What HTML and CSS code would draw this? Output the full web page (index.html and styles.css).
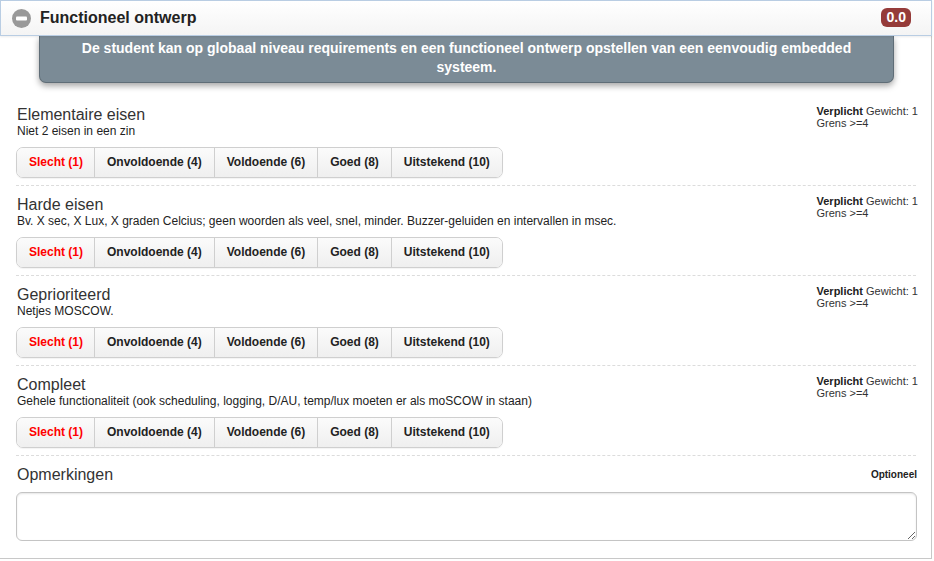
FILE: index.html
```html
<!DOCTYPE html>
<html>
<head>
<meta charset="utf-8">
<link rel="stylesheet" href="styles.css">
</head>
<body>
<div class="panel">
  <div class="panel-head">
    <svg class="toggle" width="19" height="19" viewBox="0 0 19 19"><circle cx="9.5" cy="9.5" r="9.5" fill="#999"/><rect x="4" y="7.5" width="11" height="4" rx="1" fill="#fff"/></svg>
    <span class="panel-title">Functioneel ontwerp</span>
    <span class="score">0.0</span>
  </div>
  <div class="goal">De student kan op globaal niveau requirements en een functioneel ontwerp opstellen van een eenvoudig embedded systeem.</div>
  <div class="criteria">
    <div class="criterion">
      <div class="info"><b>Verplicht</b> Gewicht: 1<br>Grens &gt;=4</div>
      <div class="crit-title">Elementaire eisen</div>
      <div class="crit-desc">Niet 2 eisen in een zin</div>
      <div class="btn-group"><span class="btn active">Slecht (1)</span><span class="btn">Onvoldoende (4)</span><span class="btn">Voldoende (6)</span><span class="btn">Goed (8)</span><span class="btn">Uitstekend (10)</span></div>
    </div>
    <div class="criterion">
      <div class="info"><b>Verplicht</b> Gewicht: 1<br>Grens &gt;=4</div>
      <div class="crit-title">Harde eisen</div>
      <div class="crit-desc">Bv. X sec, X Lux, X graden Celcius; geen woorden als veel, snel, minder. Buzzer-geluiden en intervallen in msec.</div>
      <div class="btn-group"><span class="btn active">Slecht (1)</span><span class="btn">Onvoldoende (4)</span><span class="btn">Voldoende (6)</span><span class="btn">Goed (8)</span><span class="btn">Uitstekend (10)</span></div>
    </div>
    <div class="criterion">
      <div class="info"><b>Verplicht</b> Gewicht: 1<br>Grens &gt;=4</div>
      <div class="crit-title">Geprioriteerd</div>
      <div class="crit-desc">Netjes MOSCOW.</div>
      <div class="btn-group"><span class="btn active">Slecht (1)</span><span class="btn">Onvoldoende (4)</span><span class="btn">Voldoende (6)</span><span class="btn">Goed (8)</span><span class="btn">Uitstekend (10)</span></div>
    </div>
    <div class="criterion">
      <div class="info"><b>Verplicht</b> Gewicht: 1<br>Grens &gt;=4</div>
      <div class="crit-title">Compleet</div>
      <div class="crit-desc">Gehele functionaliteit (ook scheduling, logging, D/AU, temp/lux moeten er als moSCOW in staan)</div>
      <div class="btn-group"><span class="btn active">Slecht (1)</span><span class="btn">Onvoldoende (4)</span><span class="btn">Voldoende (6)</span><span class="btn">Goed (8)</span><span class="btn">Uitstekend (10)</span></div>
    </div>
    <div class="remarks">
      <div class="opt">Optioneel</div>
      <div class="crit-title">Opmerkingen</div>
      <textarea class="remark-box"></textarea>
    </div>
  </div>
</div>
</body>
</html>
```
FILE: styles.css
```css
html, body { margin: 0; padding: 0; background: #fff; }
body { font-family: "Liberation Sans", Arial, Helvetica, sans-serif; color: #333; }
.panel {
  width: 931px;
  height: 558px;
  border-right: 1px solid #c8c8c8;
  border-bottom: 1px solid #c8c8c8;
  position: relative;
}
.panel-head {
  position: relative;
  z-index: 2;
  height: 34px;
  width: 930px;
  border: 1px solid #b9cde3;
  background: linear-gradient(#ffffff, #f4f4f4);
  display: flex;
  align-items: center;
  box-shadow: 0 1px 2px rgba(0,0,0,0.08);
}
.toggle { margin-left: 11px; margin-right: 9px; flex: none; }
.panel-title { font-weight: bold; font-size: 16px; color: #222; flex: 1; }
.score {
  background: #953b39;
  color: #fff;
  font-weight: bold;
  font-size: 14px;
  line-height: 19px;
  padding: 0 5px 0 6px;
  border-radius: 6px;
  margin-right: 20px;
  margin-top: -1px;
}
.goal {
  position: relative;
  z-index: 1;
  width: 813px;
  margin: 0 0 0 39px;
  padding: 3px 20px 5px 20px;
  background: #7b8b96;
  color: #fff;
  font-weight: bold;
  font-size: 14px;
  line-height: 19px;
  text-align: center;
  border: 1px solid #5f6d77;
  border-top: none;
  border-radius: 0 0 7px 7px;
  box-shadow: 0 3px 6px rgba(0,0,0,0.35);
}
.criteria { padding: 13px 15px 0 16px; }
.criterion {
  padding: 10px 0 7px 0;
  border-bottom: 1px dashed #dcdcdc;
}
.crit-title, .crit-desc { padding-left: 1px; }
.info {
  float: right;
  font-size: 11px;
  line-height: 12px;
  color: #333;
  margin-top: -1px;
  margin-right: -2px;
}
.info b { color: #222; }
.crit-title { font-size: 16px; line-height: 18px; color: #333; }
.crit-desc { font-size: 12px; line-height: 14px; color: #222; }
.btn-group {
  display: inline-flex;
  margin-top: 9px;
  border: 1px solid #cfcfcf;
  border-radius: 7px;
  overflow: hidden;
  box-shadow: 0 1px 1px rgba(0,0,0,0.05);
}
.btn {
  font-size: 12px;
  font-weight: bold;
  line-height: 13px;
  padding: 8px 12px;
  color: #222;
  background: linear-gradient(#fbfbfb, #efefef);
  border-left: 1px solid #cfcfcf;
}
.btn:first-child { border-left: none; padding: 8px 11px 8px 12px; }
.btn.active { color: #f00; }
.remarks { padding-top: 10px; }
.opt { float: right; font-size: 10px; font-weight: bold; color: #222; margin-top: 3px; margin-right: -1px; }
.remark-box {
  display: block;
  box-sizing: border-box;
  width: 901px;
  height: 49px;
  margin-top: 8px;
  border: 1px solid #c4c4c4;
  border-radius: 6px;
  box-shadow: inset 0 1px 2px rgba(0,0,0,0.1);
  font-family: inherit;
}
```
